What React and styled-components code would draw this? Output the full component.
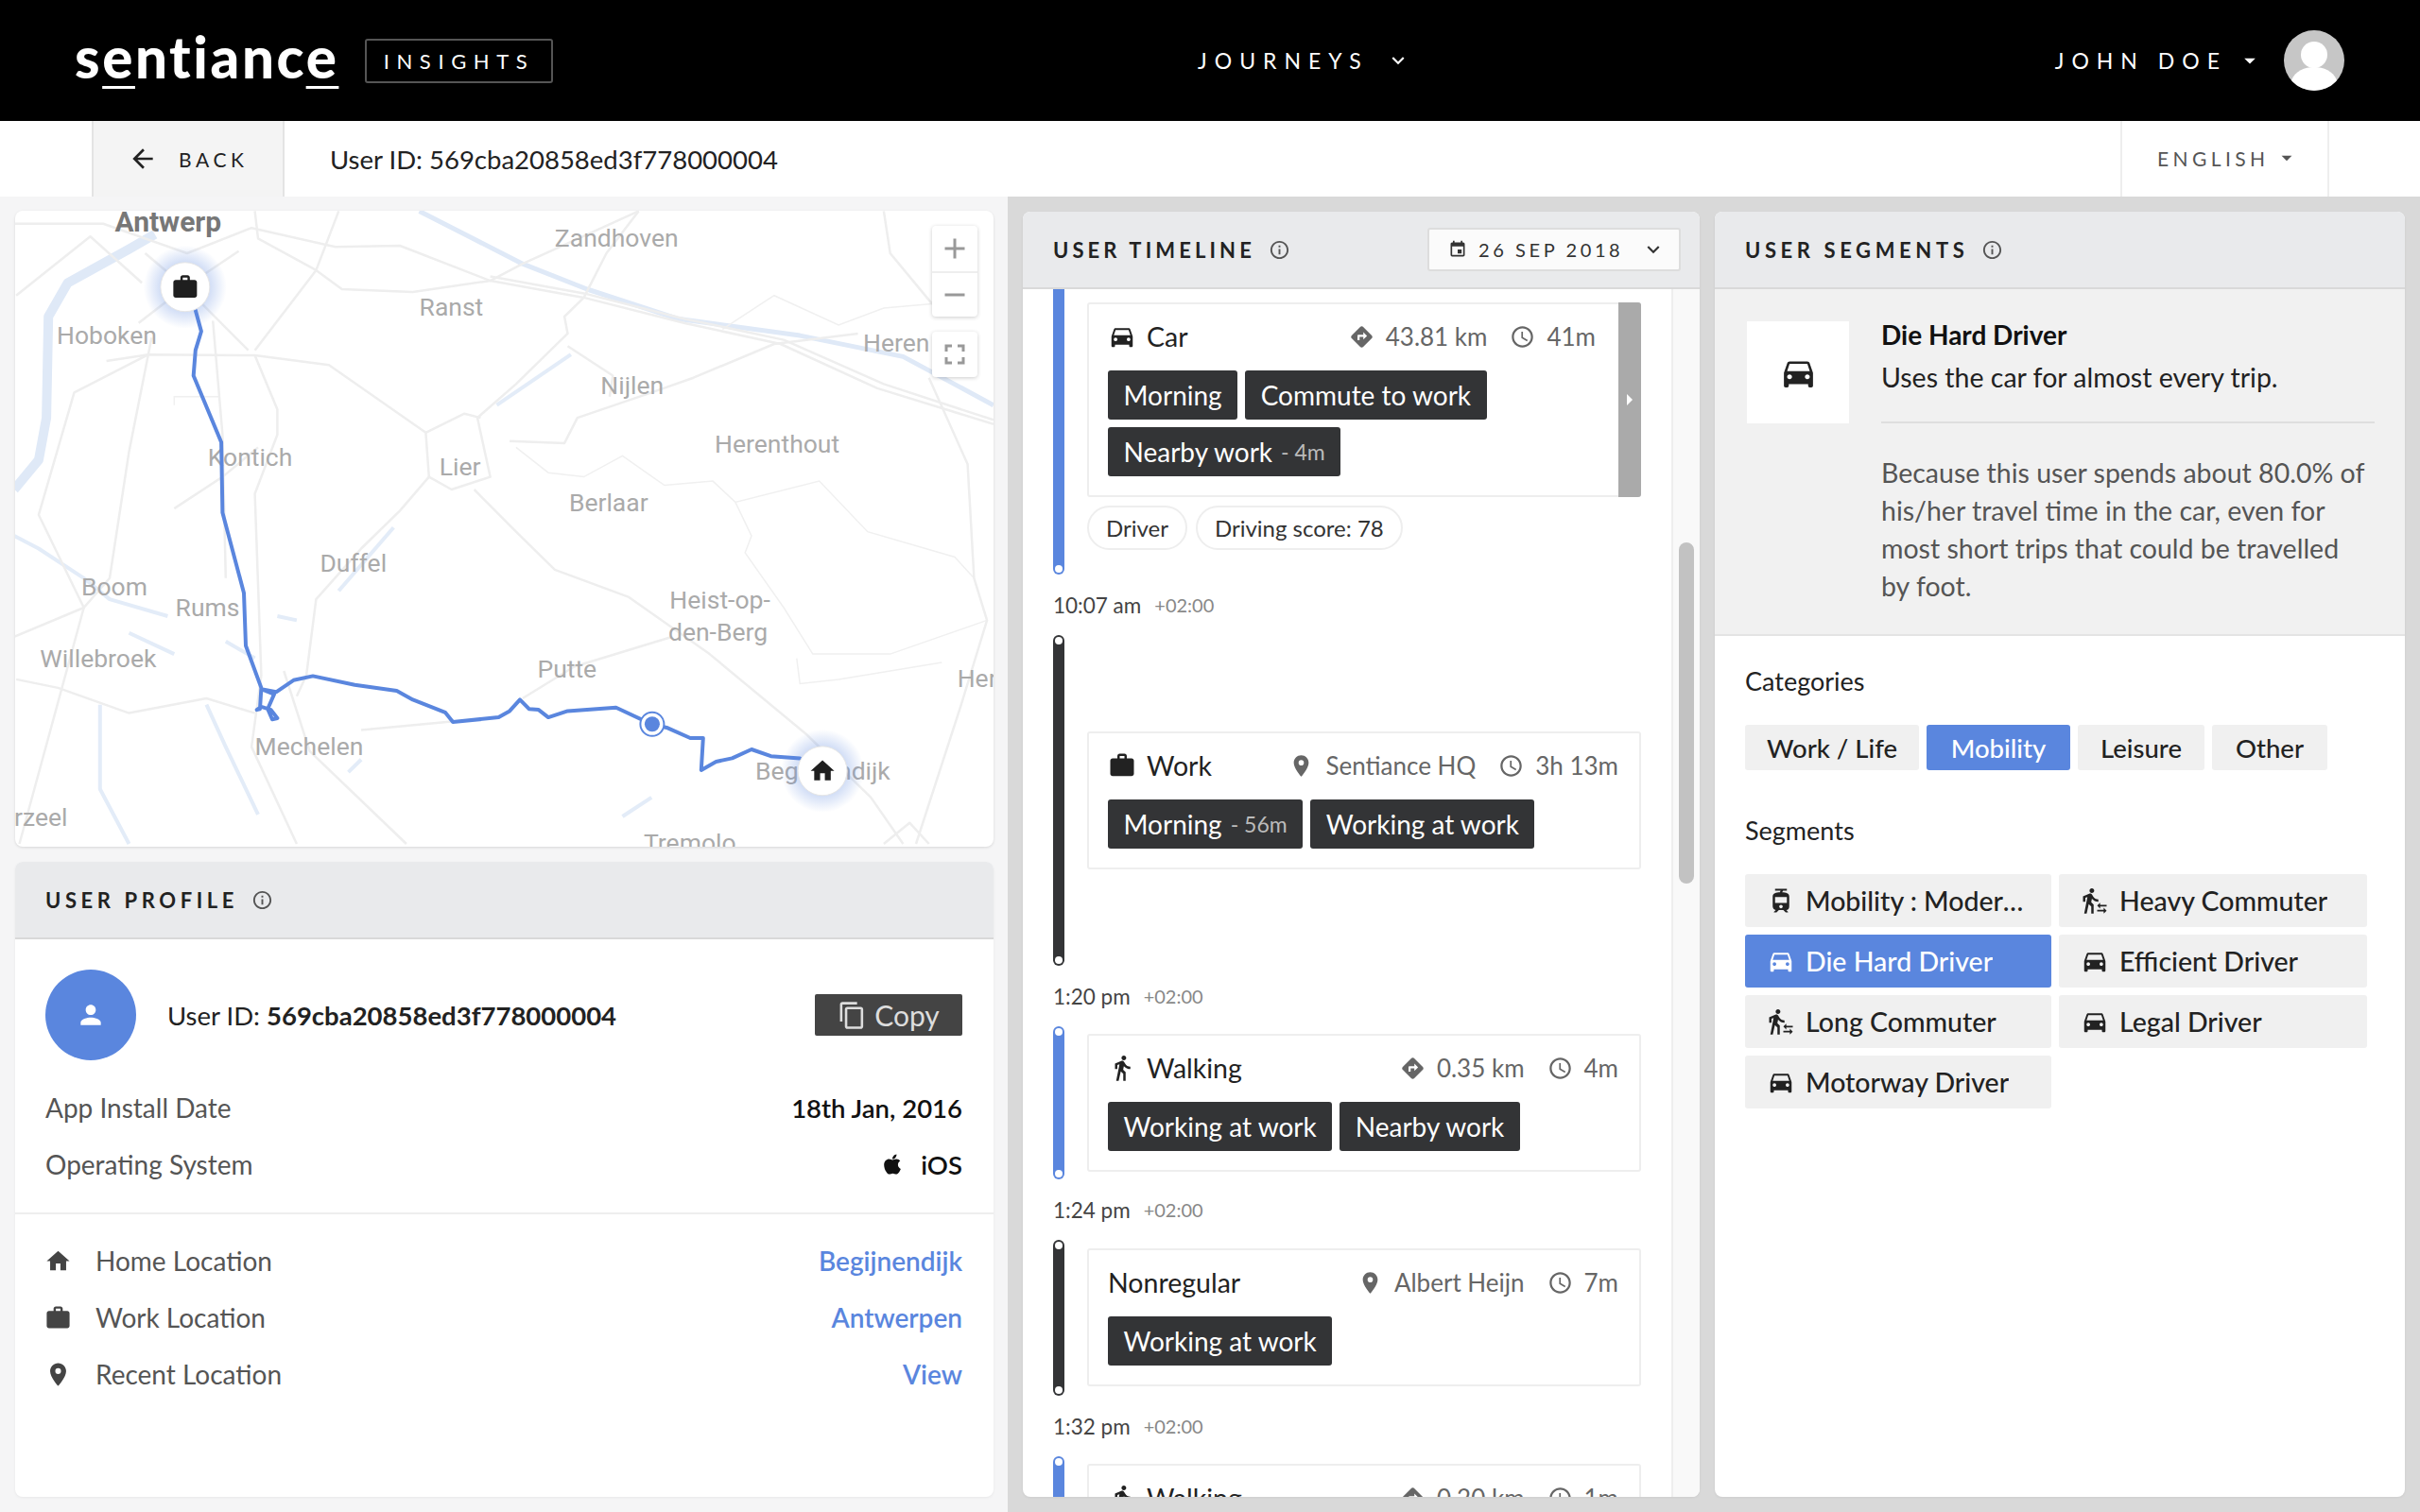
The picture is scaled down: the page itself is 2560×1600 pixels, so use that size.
import React from "react";
import styled, { createGlobalStyle } from "styled-components";
import {
  MdAccessTime,
  MdAdd,
  MdArrowBack,
  MdArrowDropDown,
  MdContentCopy,
  MdDirections,
  MdDirectionsCar,
  MdDirectionsWalk,
  MdEvent,
  MdFullscreen,
  MdHome,
  MdInfoOutline,
  MdKeyboardArrowDown,
  MdPerson,
  MdPlace,
  MdRemove,
  MdTram,
  MdTransferWithinAStation,
  MdWork,
} from "react-icons/md";
import { FaApple } from "react-icons/fa";

const BLUE = "#5a86de";
const DARK = "#333436";
const FONT = `"Lato", "Noto Sans", sans-serif`;

const GlobalStyle = createGlobalStyle`
  html, body { margin: 0; padding: 0; background: #f5f5f6; }
  body { font-family: ${FONT}; color: #222; }
  * { box-sizing: border-box; }
`;

const Page = styled.div`
  width: 2560px;
  height: 1600px;
  display: flex;
  flex-direction: column;
  overflow: hidden;
`;

/* top bar */
const Header = styled.header`
  height: 128px;
  background: #000;
  color: #fff;
  display: grid;
  grid-template-columns: 1187px auto 1fr;
  align-items: center;
  padding: 0 80px;
`;
const Brand = styled.div`
  display: flex;
  align-items: center;
  gap: 35px;
`;
const Logo = styled.div`
  width: 272px;
  font-size: 60px;
  font-weight: 900;
  line-height: 1;
  letter-spacing: 2.6px;
  margin-top: -8px;
  margin-left: -1px;
  white-space: nowrap;
  span {
    text-decoration: underline;
    text-decoration-thickness: 3px;
    text-underline-offset: 8px;
    text-decoration-skip-ink: none;
  }
`;
const ProductBox = styled.div`
  width: 199px;
  height: 47px;
  border: 2px solid #555;
  border-radius: 3px;
  font-size: 22px;
  letter-spacing: 7.6px;
  display: flex;
  align-items: center;
  justify-content: center;
`;
const NavItem = styled.div`
  display: flex;
  align-items: center;
  gap: 18px;
  font-size: 23px;
  letter-spacing: 8px;
`;
const UserMenu = styled.div`
  display: flex;
  justify-content: flex-end;
  align-items: center;
  gap: 10px;
  font-size: 23px;
  letter-spacing: 8px;
`;
const UserAvatar = styled.svg`
  width: 64px;
  height: 64px;
  margin-left: 12px;
`;

/* bar under the header */
const SubBar = styled.div`
  height: 80px;
  background: #fff;
  display: flex;
  align-items: stretch;
  padding: 0 96px 0 97px;
  font-size: 27.5px;
`;
const BackButton = styled.div`
  width: 204px;
  background: #f4f4f4;
  border-left: 2px solid #e4e4e4;
  border-right: 2px solid #e4e4e4;
  display: flex;
  align-items: center;
  gap: 22px;
  padding-left: 36px;
  font-size: 21px;
  letter-spacing: 4.6px;
  color: #222;
`;
const SubTitle = styled.div`
  flex: 1;
  display: flex;
  align-items: center;
  padding-left: 48px;
  color: #222;
`;
const LangButton = styled.div`
  width: 221px;
  border-left: 2px solid #eee;
  border-right: 2px solid #eee;
  display: flex;
  align-items: center;
  padding: 0 0 2px 37px;
  gap: 6px;
  font-size: 21px;
  letter-spacing: 4.4px;
  color: #555;
`;

/* main columns */
const Main = styled.div`
  flex: 1;
  min-height: 0;
  display: flex;
`;
const LeftColumn = styled.div`
  width: 1066px;
  padding: 15px 15px 16px 16px;
  background: #f5f5f6;
  display: flex;
  flex-direction: column;
  gap: 16px;
`;
const RightColumn = styled.div`
  flex: 1;
  min-width: 0;
  padding: 16px;
  background: #d9d9d9;
  display: flex;
  gap: 16px;
`;
const Panel = styled.section`
  background: #fff;
  border-radius: 8px;
  overflow: hidden;
  display: flex;
  flex-direction: column;
  min-height: 0;
  box-shadow: 0 1px 3px rgba(0, 0, 0, 0.06);
  flex: ${(p) => p.$flex || "none"};
  width: ${(p) => p.$width || "auto"};
`;
const PanelHead = styled.div`
  height: 82px;
  flex: none;
  background: #e9eaec;
  border-bottom: 2px solid #d9d9d9;
  display: flex;
  align-items: center;
  padding: 0 20px 0 32px;
  gap: 14px;
`;
const PanelTitle = styled.h2`
  margin: 0;
  font-size: 22px;
  font-weight: 700;
  letter-spacing: ${(p) => p.$spacing || 4.6}px;
  color: #222;
`;
const InfoIcon = styled(MdInfoOutline)`
  font-size: 23px;
  color: #555;
`;

/* map */
const MapBox = styled.div`
  position: relative;
  height: 673px;
  flex: none;
  background: #fff;
  border-radius: 8px;
  overflow: hidden;
  box-shadow: 0 1px 3px rgba(0, 0, 0, 0.12);
`;
const MapSvg = styled.svg`
  display: block;
  width: 100%;
  height: 100%;
  text {
    font-family: "Roboto", sans-serif;
    font-size: 26.5px;
    fill: #aaa;
  }
`;
const MapControls = styled.div`
  position: absolute;
  top: 16px;
  right: 17px;
  display: flex;
  flex-direction: column;
  gap: 16px;
`;
const ControlGroup = styled.div`
  width: 48px;
  background: #fff;
  border-radius: 4px;
  box-shadow: 0 1px 4px rgba(0, 0, 0, 0.2);
  display: flex;
  flex-direction: column;
`;
const ControlButton = styled.div`
  height: 48px;
  display: flex;
  align-items: center;
  justify-content: center;
  font-size: 36px;
  color: #999;
  & + & {
    border-top: 2px solid #eee;
  }
`;

/* user profile */
const ProfileBody = styled.div`
  padding: 32px 33px 0 32px;
`;
const ProfileTop = styled.div`
  display: flex;
  align-items: center;
  gap: 33px;
  height: 96px;
`;
const ProfileAvatar = styled.div`
  width: 96px;
  height: 96px;
  flex: none;
  border-radius: 50%;
  background: ${BLUE};
  color: #fff;
  font-size: 32px;
  display: flex;
  align-items: center;
  justify-content: center;
`;
const ProfileId = styled.div`
  flex: 1;
  font-size: 27.5px;
  color: #222;
  b {
    font-weight: 700;
  }
`;
const CopyButton = styled.div`
  width: 156px;
  height: 44px;
  background: #444;
  color: #ddd;
  border-radius: 2px;
  font-size: 30px;
  display: flex;
  align-items: center;
  justify-content: center;
  gap: 8px;
  svg {
    font-size: 31px;
  }
`;
const InfoRow = styled.div`
  display: flex;
  justify-content: space-between;
  align-items: center;
  height: 60px;
  font-size: 28px;
  color: #555;
`;
const InfoList = styled.div`
  margin-top: 20px;
  padding-bottom: 21px;
`;
const InfoValue = styled.div`
  display: flex;
  align-items: center;
  gap: 18px;
  color: #111;
  font-size: 27.5px;
  font-weight: 600;
`;
const Separator = styled.div`
  height: 2px;
  background: #eeeeee;
`;
const LocationList = styled.div`
  padding: 19px 33px 0 32px;
`;
const LocationLabel = styled.div`
  display: flex;
  align-items: center;
  gap: 25px;
  svg {
    font-size: 29px;
    color: #444;
    margin-left: -1px;
  }
`;
const LocationLink = styled.a`
  color: ${BLUE};
  font-weight: 600;
`;

/* timeline */
const DateButton = styled.div`
  width: 268px;
  height: 46px;
  margin-left: auto;
  background: #fbfbfb;
  border: 2px solid #dddddd;
  border-radius: 3px;
  display: flex;
  align-items: center;
  padding: 0 14px 0 20px;
  gap: 12px;
  font-size: 20px;
  letter-spacing: 3.6px;
  color: #333;
  svg:first-child {
    font-size: 20px;
  }
  svg:last-child {
    margin-left: auto;
    font-size: 26px;
  }
`;
const TimelineBody = styled.div`
  flex: 1;
  min-height: 0;
  display: flex;
`;
const TimelineList = styled.div`
  flex: 1;
  min-width: 0;
  overflow: hidden;
  padding: 0 32px;
`;
const ScrollTrack = styled.div`
  width: 30px;
  flex: none;
  background: #f9f9f9;
  border-left: 2px solid #eeeeee;
  padding: 268px 6px 0 6px;
`;
const ScrollThumb = styled.div`
  height: 361px;
  background: #c2c2c2;
  border-radius: 8px;
`;
const Trip = styled.div`
  display: flex;
  gap: 24px;
  min-height: ${(p) => p.$minHeight || 0}px;
`;
const Stripe = styled.div`
  position: relative;
  width: 12px;
  flex: none;
  background: ${(p) => (p.$active ? BLUE : DARK)};
  border-radius: ${(p) => (p.$open ? "0 0 6px 6px" : "6px")};
  &::before,
  &::after {
    content: "";
    position: absolute;
    left: 2px;
    width: 8px;
    height: 8px;
    border-radius: 50%;
    background: #fff;
  }
  &::before {
    top: 2px;
    display: ${(p) => (p.$open ? "none" : "block")};
  }
  &::after {
    bottom: 2px;
  }
`;
const TripContent = styled.div`
  flex: 1;
  min-width: 0;
  display: flex;
  flex-direction: column;
  justify-content: ${(p) => (p.$center ? "center" : "flex-start")};
  padding: ${(p) => p.$padding || "8px 0"};
`;
const Card = styled.div`
  position: relative;
  border: 2px solid #eeeeee;
  border-radius: 3px;
  padding: 14px 22px 20px 20px;
`;
const CardHead = styled.div`
  height: 40px;
  display: flex;
  align-items: center;
  font-size: 26px;
  color: #666;
  padding-right: ${(p) => (p.$withHandle ? "24px" : "0")};
`;
const CardTitle = styled.div`
  flex: 1;
  display: flex;
  align-items: center;
  gap: 11px;
  color: #222;
  font-size: 28.5px;
  svg {
    font-size: 30px;
    color: #222;
  }
`;
const CardMeta = styled.div`
  display: flex;
  align-items: center;
  gap: 12px;
  margin-left: 24px;
  svg {
    font-size: 27px;
    color: #666;
  }
`;
const TagWrap = styled.div`
  display: flex;
  flex-wrap: wrap;
  gap: 8px;
  margin-top: 16px;
  padding-right: 24px;
`;
const Tag = styled.div`
  height: 52px;
  padding: 0 16.5px;
  background: ${DARK};
  color: #fff;
  border-radius: 3px;
  font-size: 28px;
  display: flex;
  align-items: center;
  white-space: nowrap;
  small {
    font-size: 23px;
    color: #bbb;
    margin-left: 9px;
  }
`;
const CardHandle = styled.div`
  position: absolute;
  top: -2px;
  right: -2px;
  bottom: -2px;
  width: 24px;
  background: #aaaaaa;
  border-radius: 0 3px 3px 0;
  color: #fff;
  display: flex;
  align-items: center;
  justify-content: center;
  &::after {
    content: "";
    border-left: 6px solid #fff;
    border-top: 6px solid transparent;
    border-bottom: 6px solid transparent;
  }
`;
const PillRow = styled.div`
  display: flex;
  gap: 9px;
  margin-top: 9px;
`;
const Pill = styled.div`
  height: 47px;
  padding: 0 18px;
  border: 2px solid #eeeeee;
  border-radius: 24px;
  font-size: 24px;
  color: #333;
  display: flex;
  align-items: center;
`;
const TimeRow = styled.div`
  height: 64px;
  display: flex;
  align-items: center;
  gap: 14px;
  font-size: 22.5px;
  color: #444;
  small {
    font-size: 20px;
    color: #888;
  }
`;

/* segments */
const SegmentIntro = styled.div`
  background: #f1f1f1;
  border-bottom: 2px solid #e4e4e4;
  height: 367px;
  flex: none;
  padding: 34px 32px 0 34px;
  display: flex;
  gap: 34px;
`;
const SegmentSquare = styled.div`
  width: 108px;
  height: 108px;
  flex: none;
  background: #fff;
  color: #222;
  font-size: 41px;
  display: flex;
  align-items: center;
  justify-content: center;
`;
const IntroText = styled.div`
  flex: 1;
  min-width: 0;
`;
const IntroHead = styled.div`
  height: 116px;
  border-bottom: 2px solid #dedede;
  font-size: 28.5px;
  color: #222;
  line-height: 45px;
  margin-top: -8px;
  margin-bottom: 32px;
  b {
    display: block;
    font-size: 28px;
    font-weight: 700;
    color: #111;
  }
`;
const IntroParagraph = styled.p`
  margin: 0;
  padding-right: 6px;
  font-size: 28.5px;
  line-height: 40px;
  color: #555;
`;
const SegmentBody = styled.div`
  padding: 0 40px 0 32px;
`;
const Heading = styled.div`
  font-size: 27px;
  color: #222;
  height: 40px;
  display: flex;
  align-items: center;
  margin-top: ${(p) => p.$top}px;
  margin-bottom: ${(p) => p.$bottom}px;
`;
const ChipRow = styled.div`
  display: flex;
  gap: 8px;
`;
const Chip = styled.div`
  width: ${(p) => p.$width}px;
  height: 48px;
  border-radius: 3px;
  background: ${(p) => (p.$active ? BLUE : "#f0f0f0")};
  color: ${(p) => (p.$active ? "#fff" : "#222")};
  font-size: 27.5px;
  font-weight: 500;
  display: flex;
  align-items: center;
  justify-content: center;
`;
const SegmentGrid = styled.div`
  display: grid;
  grid-template-columns: 324px 326px;
  grid-auto-rows: 56px;
  gap: 8px;
`;
const SegmentTile = styled.div`
  border-radius: 3px;
  background: ${(p) => (p.$active ? BLUE : "#f0f0f0")};
  color: ${(p) => (p.$active ? "#fff" : "#222")};
  font-size: 28.5px;
  font-weight: 500;
  display: flex;
  align-items: center;
  gap: 11px;
  padding: 0 24px 0 23px;
  min-width: 0;
  white-space: nowrap;
  svg {
    flex: none;
    font-size: 30px;
  }
`;
const TileLabel = styled.span`
  overflow: hidden;
  text-overflow: ellipsis;
`;

/* positions below are read off the 1070x700 crop, this converts them */
const pt = (x, y) => [x / 1.4654 - 16, y / 2.24 - 13];
const line = (pts) =>
  pts
    .map(([x, y], i) => {
      const [px, py] = pt(x, y);
      return `${i ? "L" : "M"}${px.toFixed(1)} ${py.toFixed(1)}`;
    })
    .join(" ");

const ROADS = [
  [[20, 60], [160, 60], [290, 130], [390, 70], [520, 115], [620, 112], [760, 195], [905, 235], [1060, 295], [1210, 345], [1360, 450], [1540, 535]],
  [[760, 185], [905, 225], [1060, 285], [1215, 335], [1370, 440], [1540, 525]],
  [[395, 30], [400, 95], [490, 170], [530, 215], [640, 222], [760, 195], [810, 155], [990, 30]],
  [[525, 30], [490, 170], [395, 360]],
  [[165, 385], [230, 370], [395, 372], [510, 395], [660, 555], [665, 660], [700, 690], [760, 660], [740, 520], [800, 440], [880, 320], [875, 280], [905, 235], [940, 130], [990, 30]],
  [[660, 555], [720, 510], [745, 520]],
  [[395, 372], [430, 500], [430, 560], [395, 700], [405, 1130], [390, 1300], [460, 1530]],
  [[235, 330], [200, 600], [170, 900], [130, 970], [30, 1530]],
  [[330, 290], [345, 560], [350, 900]],
  [[270, 735], [345, 660], [400, 590]],
  [[665, 660], [620, 740], [560, 830], [490, 950], [475, 1130], [460, 1180]],
  [[735, 690], [800, 790], [860, 880], [975, 945], [1100, 1080], [1250, 1270], [1350, 1420], [1400, 1530]],
  [[790, 575], [875, 580], [895, 520], [1010, 460], [1075, 425], [1200, 345], [1330, 320]],
  [[880, 350], [950, 420], [945, 470]],
  [[1040, 1040], [890, 1110], [810, 1185]],
  [[560, 1260], [700, 1240]],
  [[25, 1140], [90, 1160], [200, 1220], [320, 1185], [395, 1220]],
  [[440, 1120], [480, 1310], [630, 1530]],
  [[20, 1040], [130, 970], [60, 750], [115, 460], [230, 370]],
  [[25, 230], [140, 90], [220, 200]],
  [[287, 210], [225, 130]],
  [[287, 210], [370, 125]],
  [[287, 210], [215, 295]],
  [[287, 210], [385, 360]],
  [[1440, 425], [1500, 630], [1510, 900], [1530, 1000], [1490, 1200], [1420, 1530]],
  [[1370, 30], [1380, 130], [1445, 250]],
  [[1370, 1530], [1410, 1480], [1440, 1530]],
];
const BORDERS = [
  [[800, 590], [850, 650], [905, 660], [965, 610], [1030, 680], [1105, 670], [1140, 720], [1270, 670], [1345, 790], [1480, 850], [1510, 900]],
  [[1140, 720], [1165, 800], [1155, 840], [1215, 970], [1260, 1080], [1380, 1080], [1530, 1000]],
  [[1120, 310], [1200, 230], [1300, 300], [1370, 260], [1445, 250]],
  [[1235, 1090], [1240, 1150], [1300, 1140], [1460, 1100]],
  [[270, 490], [270, 470], [340, 470]],
];
const RIVERS = [
  { width: 10, pts: [[240, 85], [200, 120], [105, 200], [75, 280], [72, 520], [60, 620], [22, 690]] },
  { width: 5, pts: [[650, 30], [810, 155], [910, 215], [1050, 285], [1240, 325], [1400, 375], [1540, 490]] },
];
const WATER = [
  [[22, 800], [60, 830], [130, 900], [170, 950], [260, 990]],
  [[200, 1030], [270, 1080]],
  [[350, 1050], [395, 1090]],
  [[430, 990], [460, 1000]],
  [[155, 1200], [155, 1400], [200, 1530]],
  [[610, 780], [525, 930]],
  [[885, 370], [770, 490]],
  [[320, 1200], [350, 1300], [400, 1460]],
  [[1010, 1420], [965, 1465]],
  [[540, 1360], [560, 1330]],
];
const ROUTE = [
  [303, 265], [312, 315], [303, 360], [300, 420], [343, 578], [345, 745], [378, 935], [381, 1060],
  [405, 1160], [403, 1210], [398, 1212], [405, 1205], [420, 1212], [430, 1232], [422, 1235], [415, 1210],
  [425, 1175], [405, 1163], [428, 1170], [455, 1142], [485, 1132], [550, 1153], [615, 1167], [640, 1188],
  [690, 1218], [702, 1241], [773, 1230], [790, 1215], [806, 1188], [820, 1210], [835, 1212], [850, 1230],
  [880, 1215], [955, 1207], [1010, 1246], [1035, 1255], [1070, 1279], [1090, 1279], [1087, 1355],
  [1110, 1335], [1135, 1327], [1165, 1306], [1195, 1322], [1240, 1327],
];
const PLACES = [
  ["Zandhoven", 860, 115],
  ["Ranst", 650, 278],
  ["Hoboken", 88, 345],
  ["Heren", 1338, 362],
  ["Nijlen", 931, 463],
  ["Herenthout", 1108, 603],
  ["Kontich", 322, 635],
  ["Lier", 681, 657],
  ["Berlaar", 882, 742],
  ["Duffel", 496, 885],
  ["Boom", 126, 940],
  ["Rums", 272, 990],
  ["Heist-op-", 1038, 973],
  ["den-Berg", 1036, 1048],
  ["Willebroek", 62, 1110],
  ["Putte", 833, 1135],
  ["Her", 1484, 1157],
  ["Mechelen", 395, 1320],
  ["Begijnendijk", 1171, 1378],
  ["rzeel", 22, 1488],
  ["Tremolo", 998, 1548],
];

const MapMarker = ({ x, y, icon: Icon }) => {
  const [cx, cy] = pt(x, y);
  return (
    <g>
      <circle cx={cx} cy={cy} r="44" fill="url(#markerGlow)" />
      <circle cx={cx} cy={cy} r="26" fill="#fff" stroke="#e6e6e6" strokeWidth="1" />
      <Icon x={cx - 15} y={cy - 15} size={30} color="#1f1f1f" />
    </g>
  );
};

const RouteMap = () => {
  const [dotX, dotY] = pt(1011, 1246);
  const [antX, antY] = pt(178, 78);
  return (
    <MapBox>
      <MapSvg viewBox="0 0 1035 673">
        <defs>
          <radialGradient id="markerGlow">
            <stop offset="55%" stopColor={BLUE} stopOpacity="0.3" />
            <stop offset="100%" stopColor={BLUE} stopOpacity="0" />
          </radialGradient>
        </defs>
        {RIVERS.map((r, i) => (
          <path key={i} d={line(r.pts)} fill="none" stroke="#dfe9f7" strokeWidth={r.width} strokeLinejoin="round" />
        ))}
        {WATER.map((w, i) => (
          <path key={i} d={line(w)} fill="none" stroke="#e3ecf8" strokeWidth="4" strokeLinejoin="round" />
        ))}
        {BORDERS.map((b, i) => (
          <path key={i} d={line(b)} fill="none" stroke="#f0f0f0" strokeWidth="1.5" />
        ))}
        {ROADS.map((r, i) => (
          <path key={i} d={line(r)} fill="none" stroke="#eeeeee" strokeWidth="2.5" strokeLinejoin="round" />
        ))}
        {PLACES.map(([name, x, y]) => {
          const [px, py] = pt(x, y);
          return (
            <text key={name} x={px} y={py}>
              {name}
            </text>
          );
        })}
        <text x={antX} y={antY} style={{ fontWeight: 700, fontSize: 30, fill: "#777" }}>
          Antwerp
        </text>
        <path d={line(ROUTE)} fill="none" stroke={BLUE} strokeWidth="4" strokeLinejoin="round" strokeLinecap="round" />
        <circle cx={dotX} cy={dotY} r="12.5" fill="#fff" stroke={BLUE} strokeWidth="2" />
        <circle cx={dotX} cy={dotY} r="8" fill={BLUE} />
        <MapMarker x={287} y={210} icon={MdWork} />
        <MapMarker x={1275} y={1357} icon={MdHome} />
      </MapSvg>
      <MapControls>
        <ControlGroup>
          <ControlButton>
            <MdAdd />
          </ControlButton>
          <ControlButton>
            <MdRemove />
          </ControlButton>
        </ControlGroup>
        <ControlGroup>
          <ControlButton>
            <MdFullscreen />
          </ControlButton>
        </ControlGroup>
      </MapControls>
    </MapBox>
  );
};

const TripCard = ({ icon: Icon, title, metaIcon: MetaIcon, meta, duration, tags, handle }) => (
  <Card>
    <CardHead $withHandle={handle}>
      <CardTitle>
        {Icon && <Icon />}
        {title}
      </CardTitle>
      <CardMeta>
        <MetaIcon />
        {meta}
      </CardMeta>
      <CardMeta>
        <MdAccessTime />
        {duration}
      </CardMeta>
    </CardHead>
    <TagWrap>
      {tags.map(([label, time]) => (
        <Tag key={label}>
          {label}
          {time && <small>- {time}</small>}
        </Tag>
      ))}
    </TagWrap>
    {handle && <CardHandle />}
  </Card>
);

const Time = ({ time }) => (
  <TimeRow>
    {time}
    <small>+02:00</small>
  </TimeRow>
);

const SEGMENTS = [
  { label: "Mobility : Moderate", icon: MdTram },
  { label: "Heavy Commuter", icon: MdTransferWithinAStation },
  { label: "Die Hard Driver", icon: MdDirectionsCar, active: true },
  { label: "Efficient Driver", icon: MdDirectionsCar },
  { label: "Long Commuter", icon: MdTransferWithinAStation },
  { label: "Legal Driver", icon: MdDirectionsCar },
  { label: "Motorway Driver", icon: MdDirectionsCar },
];

export default function App() {
  return (
    <Page>
      <GlobalStyle />
      <Header>
        <Brand>
          <Logo>
            s<span>e</span>ntianc<span>e</span>
          </Logo>
          <ProductBox>INSIGHTS</ProductBox>
        </Brand>
        <NavItem>
          JOURNEYS
          <MdKeyboardArrowDown size={26} />
        </NavItem>
        <UserMenu>
          JOHN DOE
          <MdArrowDropDown size={28} />
          <UserAvatar viewBox="0 0 64 64">
            <circle cx="32" cy="32" r="32" fill="#c6c6c6" />
            <circle cx="32" cy="26" r="14" fill="#fff" />
            <path d="M8 53c4-10 14-14 24-14s20 4 24 14a32 32 0 0 1-48 0z" fill="#fff" />
          </UserAvatar>
        </UserMenu>
      </Header>
      <SubBar>
        <BackButton>
          <MdArrowBack size={32} />
          BACK
        </BackButton>
        <SubTitle>User ID: 569cba20858ed3f778000004</SubTitle>
        <LangButton>
          ENGLISH
          <MdArrowDropDown size={26} />
        </LangButton>
      </SubBar>
      <Main>
        <LeftColumn>
          <RouteMap />
          <Panel $flex="1">
            <PanelHead>
              <PanelTitle>USER PROFILE</PanelTitle>
              <InfoIcon />
            </PanelHead>
            <ProfileBody>
              <ProfileTop>
                <ProfileAvatar>
                  <MdPerson />
                </ProfileAvatar>
                <ProfileId>
                  User ID: <b>569cba20858ed3f778000004</b>
                </ProfileId>
                <CopyButton>
                  <MdContentCopy />
                  Copy
                </CopyButton>
              </ProfileTop>
              <InfoList>
                <InfoRow>
                  App Install Date
                  <InfoValue>18th Jan, 2016</InfoValue>
                </InfoRow>
                <InfoRow>
                  Operating System
                  <InfoValue>
                    <FaApple size={24} />
                    iOS
                  </InfoValue>
                </InfoRow>
              </InfoList>
            </ProfileBody>
            <Separator />
            <LocationList>
              <InfoRow>
                <LocationLabel>
                  <MdHome />
                  Home Location
                </LocationLabel>
                <LocationLink>Begijnendijk</LocationLink>
              </InfoRow>
              <InfoRow>
                <LocationLabel>
                  <MdWork />
                  Work Location
                </LocationLabel>
                <LocationLink>Antwerpen</LocationLink>
              </InfoRow>
              <InfoRow>
                <LocationLabel>
                  <MdPlace />
                  Recent Location
                </LocationLabel>
                <LocationLink>View</LocationLink>
              </InfoRow>
            </LocationList>
          </Panel>
        </LeftColumn>
        <RightColumn>
          <Panel $width="716px">
            <PanelHead>
              <PanelTitle $spacing={4.1}>USER TIMELINE</PanelTitle>
              <InfoIcon />
              <DateButton>
                <MdEvent />
                26 SEP 2018
                <MdKeyboardArrowDown />
              </DateButton>
            </PanelHead>
            <TimelineBody>
              <TimelineList>
                <Trip>
                  <Stripe $active $open />
                  <TripContent $padding="14px 0 26px">
                    <TripCard
                      icon={MdDirectionsCar}
                      title="Car"
                      metaIcon={MdDirections}
                      meta="43.81 km"
                      duration="41m"
                      tags={[["Morning"], ["Commute to work"], ["Nearby work", "4m"]]}
                      handle
                    />
                    <PillRow>
                      <Pill>Driver</Pill>
                      <Pill>Driving score: 78</Pill>
                    </PillRow>
                  </TripContent>
                </Trip>
                <Time time="10:07 am" />
                <Trip $minHeight={350}>
                  <Stripe />
                  <TripContent $center>
                    <TripCard
                      icon={MdWork}
                      title="Work"
                      metaIcon={MdPlace}
                      meta="Sentiance HQ"
                      duration="3h 13m"
                      tags={[["Morning", "56m"], ["Working at work"]]}
                    />
                  </TripContent>
                </Trip>
                <Time time="1:20 pm" />
                <Trip>
                  <Stripe $active />
                  <TripContent>
                    <TripCard
                      icon={MdDirectionsWalk}
                      title="Walking"
                      metaIcon={MdDirections}
                      meta="0.35 km"
                      duration="4m"
                      tags={[["Working at work"], ["Nearby work"]]}
                    />
                  </TripContent>
                </Trip>
                <Time time="1:24 pm" />
                <Trip>
                  <Stripe />
                  <TripContent $padding="9px 0 10px">
                    <TripCard
                      title="Nonregular"
                      metaIcon={MdPlace}
                      meta="Albert Heijn"
                      duration="7m"
                      tags={[["Working at work"]]}
                    />
                  </TripContent>
                </Trip>
                <Time time="1:32 pm" />
                <Trip>
                  <Stripe $active />
                  <TripContent>
                    <TripCard
                      icon={MdDirectionsWalk}
                      title="Walking"
                      metaIcon={MdDirections}
                      meta="0.20 km"
                      duration="1m"
                      tags={[["Working at work"]]}
                    />
                  </TripContent>
                </Trip>
              </TimelineList>
              <ScrollTrack>
                <ScrollThumb />
              </ScrollTrack>
            </TimelineBody>
          </Panel>
          <Panel $flex="1">
            <PanelHead>
              <PanelTitle>USER SEGMENTS</PanelTitle>
              <InfoIcon />
            </PanelHead>
            <SegmentIntro>
              <SegmentSquare>
                <MdDirectionsCar />
              </SegmentSquare>
              <IntroText>
                <IntroHead>
                  <b>Die Hard Driver</b>
                  Uses the car for almost every trip.
                </IntroHead>
                <IntroParagraph>
                  Because this user spends about 80.0% of his/her travel time in the car, even for most short trips
                  that could be travelled by foot.
                </IntroParagraph>
              </IntroText>
            </SegmentIntro>
            <SegmentBody>
              <Heading $top={27} $bottom={27}>
                Categories
              </Heading>
              <ChipRow>
                <Chip $width={184}>Work / Life</Chip>
                <Chip $width={152} $active>
                  Mobility
                </Chip>
                <Chip $width={134}>Leisure</Chip>
                <Chip $width={122}>Other</Chip>
              </ChipRow>
              <Heading $top={43} $bottom={27}>
                Segments
              </Heading>
              <SegmentGrid>
                {SEGMENTS.map(({ label, icon: Icon, active }) => (
                  <SegmentTile key={label} $active={active}>
                    <Icon />
                    <TileLabel>{label}</TileLabel>
                  </SegmentTile>
                ))}
              </SegmentGrid>
            </SegmentBody>
          </Panel>
        </RightColumn>
      </Main>
    </Page>
  );
}
